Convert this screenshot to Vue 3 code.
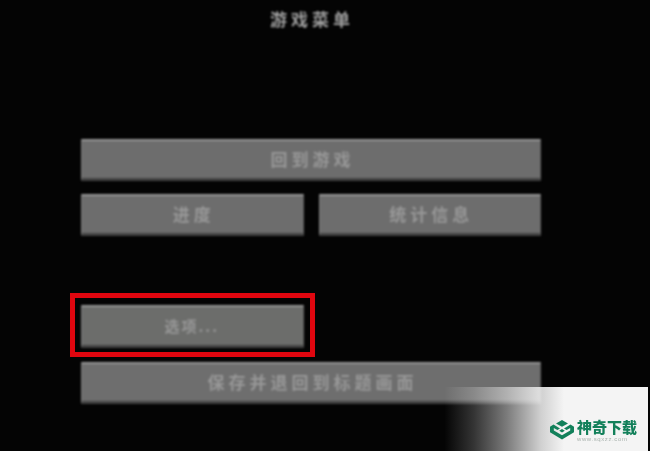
<script setup>
const topButtons = ['进度', '统计信息']
</script>

<template>
  <div class="screen">
    <h1 class="title">游戏菜单</h1>
    <div class="menu">
      <button class="btn wide"><span>回到游戏</span></button>
      <div class="row">
        <button v-for="label in topButtons" :key="label" class="btn"><span>{{ label }}</span></button>
      </div>
      <div class="row options-row">
        <div class="highlight">
          <button class="btn"><span class="options-label">选项...</span></button>
        </div>
        <div class="spacer"></div>
      </div>
      <button class="btn wide last"><span>保存并退回到标题画面</span></button>
    </div>
    <div class="watermark">
      <svg class="logo" viewBox="0 0 24 20" width="24" height="20" aria-hidden="true">
        <path d="M12 0 L18 3.4 L12 6.8 L6 3.4 Z" fill="#12805a" />
        <path d="M3.5 4.6 L10 8.4 L7.4 10 L3.8 8 L3.8 10.6 L12 15.2 L20.2 10.6 L20.2 8 L16.6 10 L14 8.4 L20.5 4.6 L24 6.8 L24 12.2 L12 19.6 L0 12.2 L0 6.8 Z" fill="#12805a" />
        <path d="M12 9 L14.8 10.8 L12 12.6 L9.2 10.8 Z" fill="#12805a" />
      </svg>
      <div class="brand">
        <div class="brand-name">神奇下载</div>
        <div class="brand-url">www.sqxzz.com</div>
      </div>
    </div>
  </div>
</template>

<style scoped>
.screen {
  position: relative;
  width: 650px;
  height: 451px;
  overflow: hidden;
  background: #040404;
  font-family: "Noto Sans CJK SC", "Liberation Sans", sans-serif;
}
.title {
  margin: 0;
  padding: 8px 26px 0 0;
  height: 130px;
  box-sizing: border-box;
  text-align: center;
  font-size: 17px;
  line-height: 22px;
  font-weight: 700;
  letter-spacing: 4px;
  color: #a0a0a0;
  filter: blur(1.1px);
}
.menu {
  display: flex;
  flex-direction: column;
  padding: 9px 109px 0 81px;
}
.row {
  display: flex;
  gap: 15px;
  margin-top: 13px;
}
.row .btn {
  flex: 1;
  min-width: 0;
}
.btn {
  display: flex;
  align-items: center;
  justify-content: center;
  height: 42px;
  padding: 0 0 2px 3px;
  border: 0;
  border-top: 2px solid #969696;
  border-left: 1px solid #7e7e7e;
  border-right: 1px solid #5c5c5c;
  border-bottom: 3px solid #424242;
  border-radius: 1px;
  background: #6d6d6d;
  box-sizing: border-box;
  font-family: inherit;
  font-size: 17px;
  font-weight: 700;
  letter-spacing: 4px;
  color: #989898;
  filter: blur(0.8px);
}
.btn span {
  filter: blur(0.7px);
}
.options-row {
  margin-top: 69px;
  gap: 15px;
}
.highlight {
  flex: 1;
  min-width: 0;
  position: relative;
  display: flex;
}
.highlight::after {
  content: "";
  position: absolute;
  left: -11px;
  right: -11px;
  top: -12px;
  bottom: -9px;
  border: 5px solid #e0060f;
  filter: blur(0.4px);
  pointer-events: none;
}
.highlight .btn {
  height: 43px;
  width: 100%;
  background: #6c6d6b;
}
.options-label {
  font-size: 15px;
  letter-spacing: 2px;
  margin-right: 4px;
}
.spacer {
  flex: 1;
}
.last {
  margin-top: 14px;
  background: #6e6e6e;
}
.watermark {
  position: absolute;
  right: 2px;
  bottom: 0;
  width: 210px;
  height: 64px;
  display: flex;
  align-items: flex-start;
  gap: 3px;
  padding: 32px 11px 0 112px;
  box-sizing: border-box;
  background: linear-gradient(90deg, rgba(244,244,244,0) 3%, rgba(244,244,244,0.2) 17%, rgba(244,244,244,0.5) 33%, rgba(244,244,244,0.85) 49%, #f4f4f4 60%);
}
.logo {
  flex: none;
  margin-top: 1px;
  filter: blur(0.4px);
}
.brand {
  flex: none;
  width: 62px;
}
.brand-name {
  font-size: 15px;
  line-height: 16px;
  font-weight: 900;
  color: #13805a;
  white-space: nowrap;
  filter: blur(0.4px);
}
.brand-url {
  font-family: "Liberation Sans", sans-serif;
  font-size: 6px;
  line-height: 8px;
  letter-spacing: 0.6px;
  color: #a9b3ae;
  white-space: nowrap;
  filter: blur(0.5px);
}
</style>
